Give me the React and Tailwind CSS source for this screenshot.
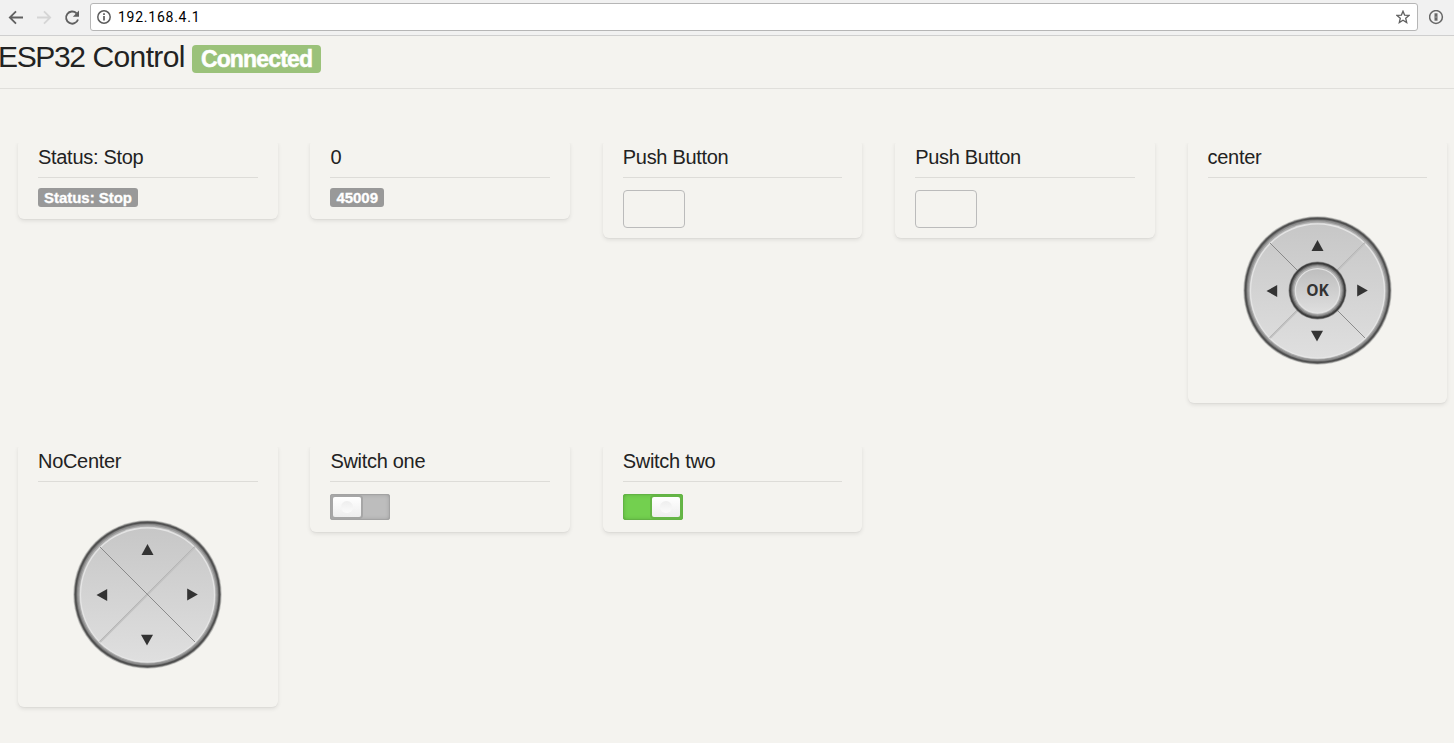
import React from 'react';

function DPad({ id, center = false }) {
  const fill = `pad-${id}`;
  const inner = `ok-${id}`;
  return (
    <svg className="block h-[150px] w-[150px] shrink-0" viewBox="-74.5 -75.5 150 150">
      <defs>
        <linearGradient id={fill} x1="0" y1="0" x2="0" y2="1">
          <stop offset="0" stopColor="#c7c7c7" />
          <stop offset="1" stopColor="#dfdfdf" />
        </linearGradient>
        <linearGradient id={inner} x1="0" y1="0" x2="0" y2="1">
          <stop offset="0" stopColor="#bebebe" />
          <stop offset="1" stopColor="#dedede" />
        </linearGradient>
      </defs>
      <circle r="74.2" fill="#c2c2bf" />
      <circle r="73.4" fill="#7c7c7b" />
      <circle r="72.7" fill="#4e4e4e" />
      <circle r="71.3" fill="#6d6d6d" />
      <circle r="70.5" fill="#8e8e8e" />
      <circle r="69.2" fill="#aaaaaa" />
      <circle r="68" fill="#d3d3d3" cy="0.3" />
      <circle r="67.5" fill="#e6e6e6" cy="0.5" />
      <circle r="66.4" fill={`url(#${fill})`} cy="0.5" />
      <path d="M-47.5 47.5L47.5 -47.5" stroke="#c2c2c2" strokeWidth="2.2" />
      <path d="M-48 47L47 -48" stroke="#b0b0b0" strokeWidth="0.7" />
      <path d="M-47.5 -47.5L47.5 47.5" stroke="#777777" strokeWidth="0.8" />
      {center && (
        <g>
          <circle r="29" fill="#8d8d8d" />
          <circle r="28.3" fill="#3d3d3d" />
          <circle r="26.6" fill="#686868" />
          <circle r="25.4" fill="#929292" />
          <circle r="24.2" fill="#b1b1b1" />
          <circle r="22.8" fill="#e2e2e2" cy="0.4" />
          <circle r="21.5" fill={`url(#${inner})`} cy="0.2" />
          <text
            x="0"
            y="5.6"
            textAnchor="middle"
            className="fill-[#333333] font-['Open_Sans','Liberation_Sans',sans-serif] text-[15.5px] font-bold"
          >
            OK
          </text>
        </g>
      )}
      <g fill="#333333">
        <path d="M0 -50.5L6 -39.5H-6Z" />
        <path d="M-0.5 51L5.5 40.3H-6.5Z" />
        <path d="M-51 0.5L-40.3 -5.5V6.5Z" />
        <path d="M50.3 0L39.7 -6V6Z" />
      </g>
    </svg>
  );
}

function Card({ title, children }) {
  return (
    <section className="rounded-md bg-[#f4f3ef] px-5 pt-[6px] pb-3 shadow-[0_2px_4px_rgba(0,0,0,0.09),0_1px_1px_rgba(0,0,0,0.03)] [clip-path:inset(4px_-8px_-8px_-8px)]">
      <h5 className="h-[33px] border-b border-[#dddcd8] text-[20px] leading-[24px] tracking-[-0.3px] whitespace-nowrap text-[#222222]">
        {title}
      </h5>
      {children}
    </section>
  );
}

function Label({ children }) {
  return (
    <div className="mt-[10px] flex">
      <span className="h-[19px] rounded-[3px] bg-[#999999] px-[6px] text-[15px] leading-[19px] font-bold tracking-[-0.03px] whitespace-nowrap text-white [-webkit-text-stroke:0.3px_white]">
        {children}
      </span>
    </div>
  );
}

function PushButton() {
  return (
    <button
      className="mt-3 -mb-[2px] block h-[38px] w-[62px] rounded-[4px] border border-[#bbbbbb]"
      aria-label="Push"
    />
  );
}

function Switch({ on = false }) {
  return (
    <div
      className={
        on
          ? 'mt-3 flex h-[26px] w-[60px] items-center justify-end rounded-[3px] bg-[#73d04f] p-[3px] shadow-[inset_0_0_0_1px_#62b344,inset_0_0_4px_#559f38]'
          : 'mt-3 flex h-[26px] w-[60px] items-center justify-start rounded-[3px] bg-[#bdbdbd] p-[3px] shadow-[inset_0_0_0_1px_#a3a3a3,inset_0_0_4px_#929292]'
      }
    >
      <span
        className={
          on
            ? 'flex h-5 w-7 items-center justify-center rounded-[2px] bg-linear-to-b from-white to-[#eeeeee] shadow-[0_0_0_2px_#65b546]'
            : 'flex h-5 w-7 items-center justify-center rounded-[2px] bg-linear-to-b from-white to-[#eeeeee] shadow-[0_0_0_2px_#a6a6a6]'
        }
      >
        <span className="h-3 w-3 rounded-full bg-linear-to-b from-[#eeeeee] to-[#fbfbfb]" />
      </span>
    </div>
  );
}

function BrowserBar() {
  return (
    <header className="flex h-9 items-center border-b border-[#cfcfcf] bg-[#f1f1f1] pl-2">
      <svg className="h-4 w-4" viewBox="0 0 16 16" fill="none" stroke="#606060" strokeWidth="1.8">
        <path d="M15 7.5H2M8 1.3L1.8 7.5L8 13.7" />
      </svg>
      <svg className="ml-3 h-4 w-4" viewBox="0 0 16 16" fill="none" stroke="#d5d5d5" strokeWidth="1.8">
        <path d="M1 7.5H14M8 1.3L14.2 7.5L8 13.7" />
      </svg>
      <svg className="ml-3 h-4 w-4" viewBox="0 0 16 16" fill="none">
        <path d="M14 9.5A6.1 6.1 0 1 1 12.5 3.2" stroke="#606060" strokeWidth="1.9" />
        <path d="M15 0.5V6.7H8.8Z" fill="#606060" />
      </svg>
      <div className="-mt-[1px] ml-[10px] flex h-7 w-[1328px] items-center rounded-[3px] border border-[#b6b6b6] bg-white pr-[7px] pl-[6px]">
        <svg className="h-[14px] w-[14px]" viewBox="0 0 14 14" fill="none">
          <circle cx="7" cy="7" r="6.2" stroke="#5c5c5c" strokeWidth="1.5" />
          <path d="M7 6V10.5M7 3.3V5" stroke="#5c5c5c" strokeWidth="1.7" />
        </svg>
        <span className="ml-[7px] flex-1 font-['Roboto','Liberation_Sans',sans-serif] text-[14px] leading-5 tracking-[0.75px] text-black">
          192.168.4.1
        </span>
        <svg className="h-[14px] w-[14px]" viewBox="0 0 14 14" fill="none" stroke="#606060" strokeWidth="1.3">
          <path d="M7 1.2L8.6 5.1L13 5.4L9.7 8.2L10.7 12.5L7 10.2L3.3 12.5L4.3 8.2L1 5.4L5.4 5.1Z" />
        </svg>
      </div>
      <svg className="ml-[11px] h-[15px] w-[15px]" viewBox="0 0 15 15" fill="none">
        <circle cx="7" cy="7" r="6.4" stroke="#666666" strokeWidth="1.5" />
        <path d="M7 3.3V10.7" stroke="#666666" strokeWidth="3" />
        <path d="M7 6.3V7.9" stroke="#aaaaaa" strokeWidth="1" />
      </svg>
    </header>
  );
}

export default function App() {
  return (
    <div className="h-[743px] w-[1454px] overflow-hidden bg-[#f4f3ef] font-['Liberation_Sans',Arial,sans-serif]">
      <BrowserBar />
      <div className="flex h-[53px] items-start border-b border-[#e0dfdb]">
        <h1 className="-ml-[2px] w-[194px] pt-[3px] text-[30px] leading-9 tracking-[-0.6px] whitespace-nowrap text-[#222222]">
          <span className="tracking-[-1.35px]">ESP32</span> Control
        </h1>
        <span className="mt-[9px] flex h-7 w-[129px] items-center justify-center rounded-[4px] bg-[#9bc27a] text-[23px] font-bold tracking-[-0.85px] text-white [-webkit-text-stroke:0.5px_white]">
          Connected
        </span>
      </div>
      <main className="grid grid-cols-[repeat(5,259.6px)] grid-rows-[304px_270px] items-start gap-x-[32.8px] pt-[50px] pl-[18px]">
        <Card title="Status: Stop">
          <Label>Status: Stop</Label>
        </Card>
        <Card title="0">
          <Label>45009</Label>
        </Card>
        <Card title="Push Button">
          <PushButton />
        </Card>
        <Card title="Push Button">
          <PushButton />
        </Card>
        <Card title="center">
          <div className="flex h-[213px] justify-center pt-[37px] pl-[1.4px]">
            <DPad id="center" center />
          </div>
        </Card>
        <Card title="NoCenter">
          <div className="flex h-[213px] justify-center pt-[37px] pl-[0.4px]">
            <DPad id="plain" />
          </div>
        </Card>
        <Card title="Switch one">
          <Switch />
        </Card>
        <Card title="Switch two">
          <Switch on />
        </Card>
      </main>
    </div>
  );
}
